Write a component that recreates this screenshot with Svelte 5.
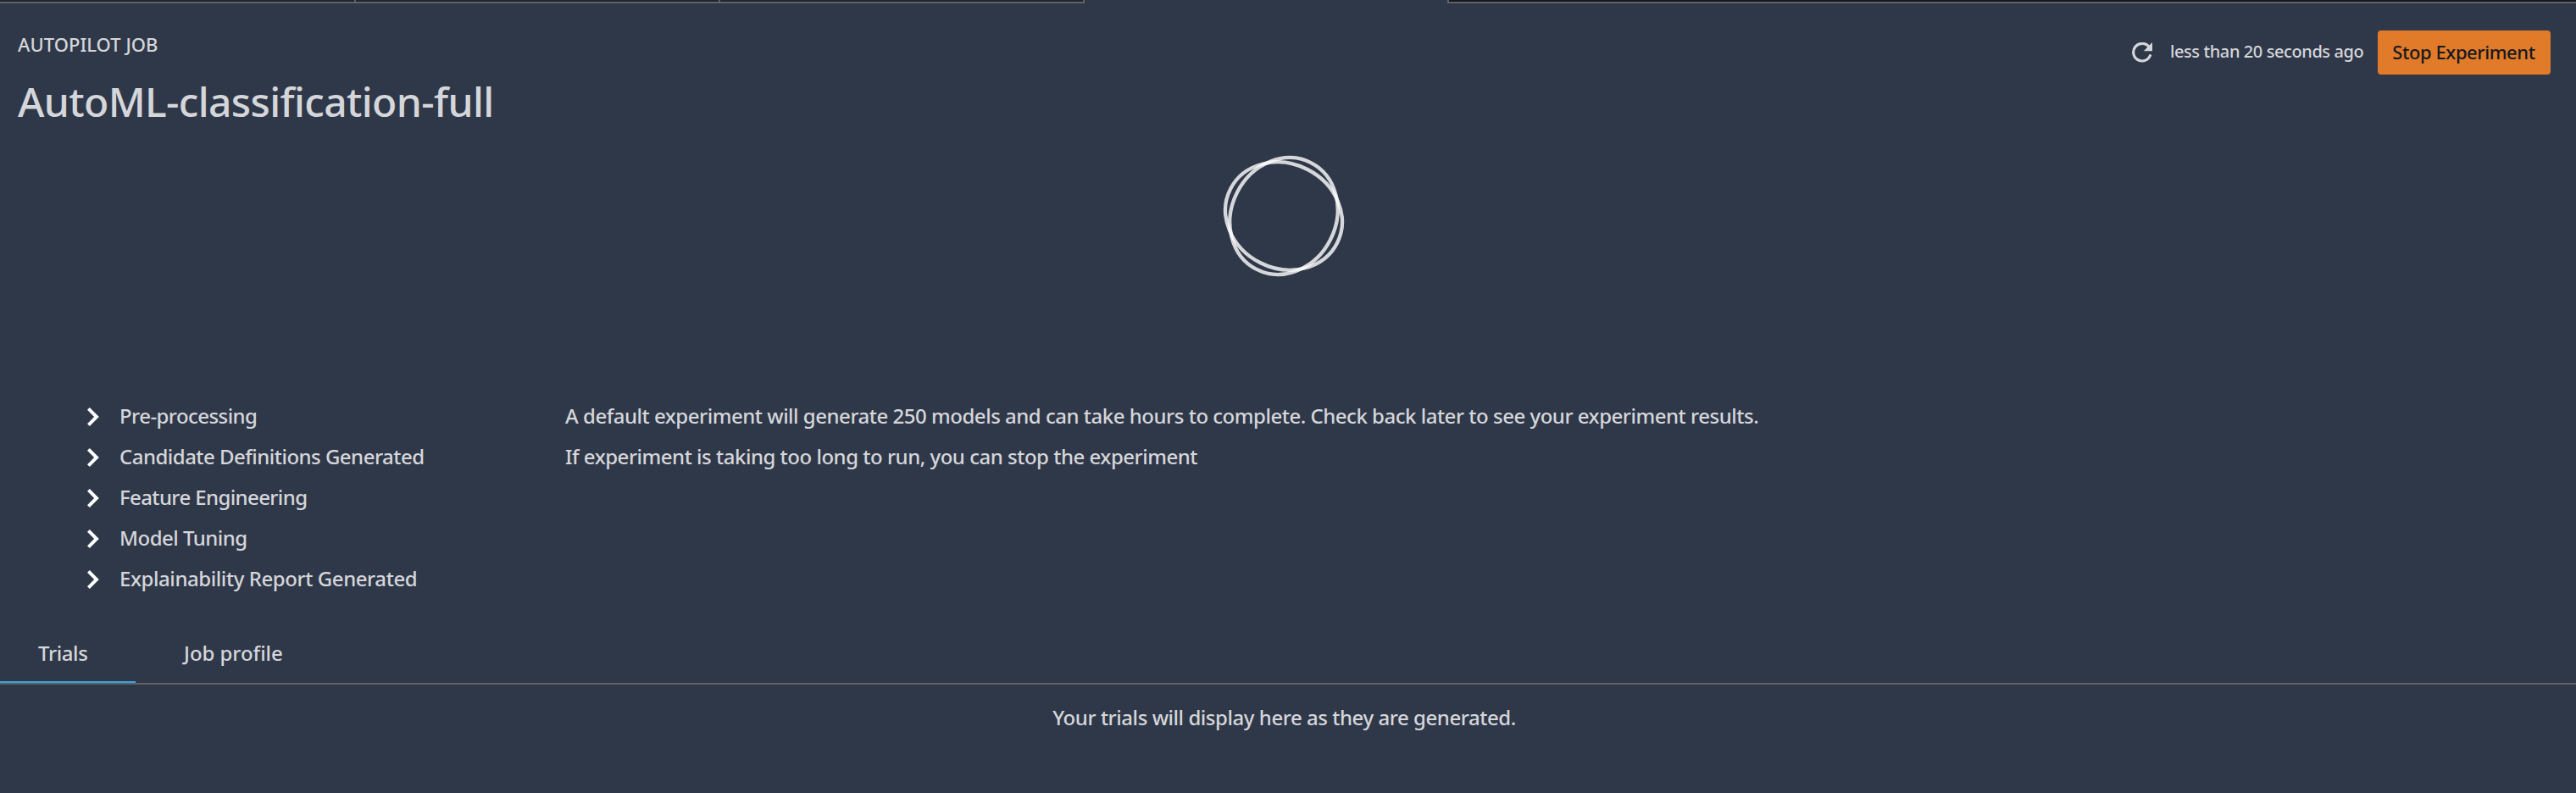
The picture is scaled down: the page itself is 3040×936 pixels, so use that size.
<script>
  const steps = [
    { label: 'Pre-processing', ls: -0.57 },
    { label: 'Candidate Definitions Generated', ls: -0.52 },
    { label: 'Feature Engineering', ls: -0.61 },
    { label: 'Model Tuning', ls: -0.53 },
    { label: 'Explainability Report Generated', ls: -0.43 }
  ];
</script>

<div class="page">
  <div class="strip">
    <span class="tab first"></span>
    <span class="tab second"></span>
    <span class="tab third"></span>
    <span class="active"></span>
    <span class="rest"></span>
  </div>

  <header>
    <div class="titles">
      <div class="kind">AUTOPILOT JOB</div>
      <h1>AutoML-classification-full</h1>
    </div>
    <div class="actions">
      <svg class="refresh" width="24" height="24" viewBox="0 0 24 24">
        <path d="M20.3 5.6A10.3 10.3 0 1 0 21.9 14.4" fill="none" stroke="#d5d6da" stroke-width="3.2" />
        <path d="M24 0V10.2H13.8Z" fill="#d5d6da" />
      </svg>
      <span class="ago">less than 20 seconds ago</span>
      <button>Stop Experiment</button>
    </div>
  </header>

  <div class="loading">
    <svg width="150" height="150" viewBox="-75 -75 150 150" fill="none" stroke="#fff" stroke-opacity=".8" stroke-width="4.3">
      <ellipse rx="70.6" ry="61.7" transform="rotate(27)" />
      <ellipse rx="70.6" ry="61.7" transform="rotate(-63)" />
    </svg>
  </div>

  <section class="progress">
    <ul>
      {#each steps as step}
        <li>
          <svg width="16" height="24" viewBox="0 0 16 24">
            <path d="M1.4 2.4L11 12L1.4 21.6" fill="none" stroke="#fff" stroke-width="4" />
          </svg>
          <span style="letter-spacing:{step.ls}px">{step.label}</span>
        </li>
      {/each}
    </ul>
    <div class="info">
      <p>A default experiment will generate 250 models and can take hours to complete. Check back later to see your experiment results.</p>
      <p>If experiment is taking too long to run, you can stop the experiment</p>
    </div>
  </section>

  <nav>
    <div class="item selected">Trials</div>
    <div class="item profile">Job profile</div>
  </nav>
  <div class="empty">Your trials will display here as they are generated.</div>
</div>

<style>
  :global(body) { background: #2f3849; }
  .page {
    width: 3040px;
    height: 936px;
    overflow: hidden;
    background: #2f3849;
    color: #d5d6da;
    font: 500 24px/48px "Noto Sans", sans-serif;
    white-space: nowrap;
  }
  .page * { box-sizing: border-box; }
  .strip { display: flex; height: 4px; }
  .tab { border-right: 2px solid #626262; border-bottom: 2px solid #626262; background: #202533; }
  .first { width: 420px; }
  .second { width: 430px; }
  .third { width: 430px; }
  .active { width: 428px; }
  .rest { flex: 1; border-left: 2px solid #626262; border-bottom: 2px solid #626262; background: #151822; }

  header { display: flex; justify-content: space-between; height: 176px; padding: 32px 30px 0 21px; }
  .kind { font-size: 22px; line-height: 33px; letter-spacing: 0.04px; }
  h1 { margin: 21px 0 0; font-size: 48px; font-weight: 500; line-height: 60px; letter-spacing: -0.65px; }
  .actions { display: flex; align-items: center; height: 52px; }
  .ago { margin: 0 16px 3px 21px; font-size: 20px; letter-spacing: -0.41px; width: 229px; }
  button {
    width: 204px;
    height: 52px;
    padding: 0 1px 1px 0;
    border: 0;
    border-radius: 4px;
    background: #e17b29;
    color: #16191f;
    font: 500 22px/51px "Noto Sans", sans-serif;
    letter-spacing: -0.43px;
  }
  .loading { display: flex; justify-content: center; height: 287px; padding-right: 11px; }

  .progress { display: flex; height: 273px; padding-left: 103px; }
  ul { width: 563px; margin: 0; padding: 0; list-style: none; }
  li { display: flex; align-items: center; gap: 22px; height: 48px; }
  li svg { margin-top: 2px; }
  p { margin: 0; padding-left: 1px; letter-spacing: -0.487px; }

  nav { display: flex; height: 68px; border-bottom: 2px solid #626262; }
  .item { height: 66px; padding-top: 7px; }
  .selected { width: 160px; padding-left: 45px; border-bottom: 2px solid #36a5e0; letter-spacing: -0.4px; }
  .profile { padding-left: 57px; letter-spacing: -0.05px; }
  .empty { margin-top: 15px; padding-right: 9px; text-align: center; letter-spacing: -0.455px; }
</style>
